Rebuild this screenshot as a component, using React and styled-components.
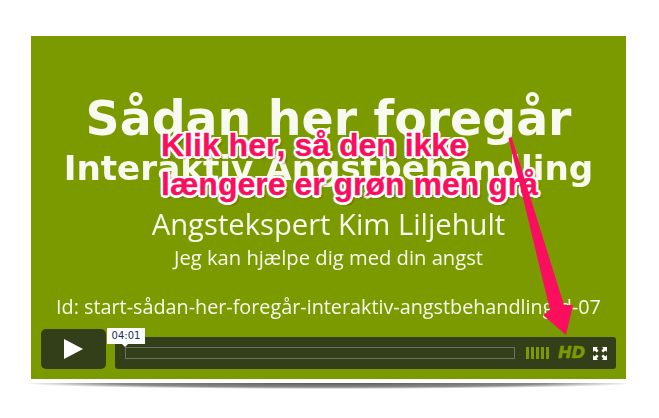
import React from "react";
import styled, { createGlobalStyle } from "styled-components";

const Global = createGlobalStyle`
  html, body { margin: 0; padding: 0; background: #fff; }
  body { width: 659px; height: 418px; overflow: hidden; font-family: "DejaVu Sans", sans-serif; }
`;
const Page = styled.div`
  position: relative;
  width: 659px;
  height: 418px;
  padding: 36px 33px 0 31px;
  box-sizing: border-box;
`;
const Player = styled.div`
  position: relative;
  height: 343px;
  background: #7b9a00;
  display: flex;
  flex-direction: column;
  padding: 0 10px 10px;
  box-sizing: border-box;
`;
const Slide = styled.div`
  flex: 1;
  display: flex;
  flex-direction: column;
  align-items: center;
  color: #f8faef;
  padding-top: 55px;
  white-space: nowrap;
`;
const Title = styled.div`
  font-weight: 700;
  font-size: ${p => p.$size}px;
  line-height: ${p => p.$line}px;
  margin-top: ${p => p.$top || 0}px;
  filter: blur(.4px);
`;
const Line = styled.div`
  font-family: "Open Sans", "DejaVu Sans", sans-serif;
  font-size: ${p => p.$size}px;
  line-height: ${p => p.$line}px;
  margin-top: ${p => p.$top || 0}px;
  filter: blur(.25px);
`;
const Controls = styled.div`
  display: flex;
  align-items: flex-end;
  gap: 9px;
  height: 40px;
`;
const PlayButton = styled.div`
  width: 65px;
  height: 40px;
  background: #323f18;
  border-radius: 5px;
  display: flex;
  align-items: center;
  justify-content: center;
`;
const Bar = styled.div`
  position: relative;
  flex: 1;
  height: 32px;
  background: #323f18;
  border-radius: 3px;
  display: flex;
  align-items: center;
  padding: 0 9px 0 10px;
  box-sizing: border-box;
`;
const Track = styled.div`
  width: 390px;
  height: 12px;
  box-sizing: border-box;
  border: 1px solid #6c7164;
`;
const Volume = styled.div`
  display: flex;
  gap: 2px;
  margin-left: 11px;
`;
const VolumeTick = styled.span`
  width: 3px;
  height: 12px;
  background: #7b9a00;
`;
const Hd = styled.span`
  font: italic 700 16.5px/1 "DejaVu Sans", sans-serif;
  color: #7b9a00;
  margin-left: 9px;
  letter-spacing: -.4px;
  -webkit-text-stroke: .4px #7b9a00;
`;
const FullScreen = styled.svg`
  margin-left: auto;
  display: block;
`;
const Tooltip = styled.div`
  position: absolute;
  left: -8px;
  top: -9px;
  width: 38px;
  height: 16px;
  background: #fff;
  color: #17305c;
  font: 10px/16px "DejaVu Sans", sans-serif;
  text-align: center;
  &::after {
    content: "";
    position: absolute;
    left: 15px;
    top: 16px;
    border: 3px solid transparent;
    border-top-color: #fff;
    border-bottom: 0;
  }
`;
const Shadow = styled.div`
  height: 6px;
  margin-top: 4px;
  background: radial-gradient(ellipse 52% 100% at 50% 0, #5a5a5a 0%, #8a8a8a 70%, rgba(255,255,255,0) 100%);
`;
const Callout = styled.div`
  position: absolute;
  left: 161px;
  top: 126px;
  color: #fa0f5f;
  font: 700 32px/39px "Liberation Sans", Arial, sans-serif;
  white-space: nowrap;
  -webkit-text-stroke: .3px #fa0f5f;
  text-shadow: -2.5px 0 0 #fff, 2.5px 0 0 #fff, 0 -2.5px 0 #fff, 0 2.5px 0 #fff,
    -2px -2px 0 #fff, 2px -2px 0 #fff, -2px 2px 0 #fff, 2px 2px 0 #fff,
    3px 3px 2px rgba(40, 50, 10, .45);
`;
const Arrow = styled.svg`
  position: absolute;
  left: 0;
  top: 0;
  pointer-events: none;
`;

export default function App() {
  return (
    <Page>
      <Global />
      <Player>
        <Slide>
          <Title $size={47.4} $line={56}>Sådan her foregår</Title>
          <Title $size={34.2} $line={36} $top={3}>Interaktiv Angstbehandling</Title>
          <Line $size={29.2} $line={40} $top={18}>Angstekspert Kim Liljehult</Line>
          <Line $size={20.2} $line={26} $top={0}>Jeg kan hjælpe dig med din angst</Line>
          <Line $size={19.8} $line={28} $top={23}>Id: start-sådan-her-foregår-interaktiv-angstbehandling-d-07</Line>
        </Slide>
        <Controls>
          <PlayButton>
            <svg width="19" height="20" viewBox="0 0 19 20"><path d="M0 0 L19 10 L0 20 Z" fill="#fff" /></svg>
          </PlayButton>
          <Bar>
            <Tooltip>04:01</Tooltip>
            <Track />
            <Volume>
              {[0, 1, 2, 3, 4].map(i => <VolumeTick key={i} />)}
            </Volume>
            <Hd>HD</Hd>
            <FullScreen width="14" height="13" viewBox="0 0 14 13">
              <path fill="#fff" d="M0 0h5L3.600 1.600 5.600 3.800 3.800 5.400 1.600 3.400 0 5zM14 0H9l1.400 1.600-2 2.200 1.800 1.600 2.200-2L14 5zM0 13h5l-1.400-1.600 2-2.200-1.800-1.600-2.200 2L0 8zM14 13H9l1.400-1.600-2-2.200 1.800-1.600 2.200 2L14 8z" />
            </FullScreen>
          </Bar>
        </Controls>
      </Player>
      <Shadow />
      <Callout>Klik her, så den ikke<br />længere er grøn men grå</Callout>
      <Arrow width="659" height="418" viewBox="0 0 659 418">
        <path fill="#fa0f5f" d="M508.500 138 L511.500 137 L564 305 L573 305 L566 335 L543 315 L550 310 Z" />
      </Arrow>
    </Page>
  );
}
